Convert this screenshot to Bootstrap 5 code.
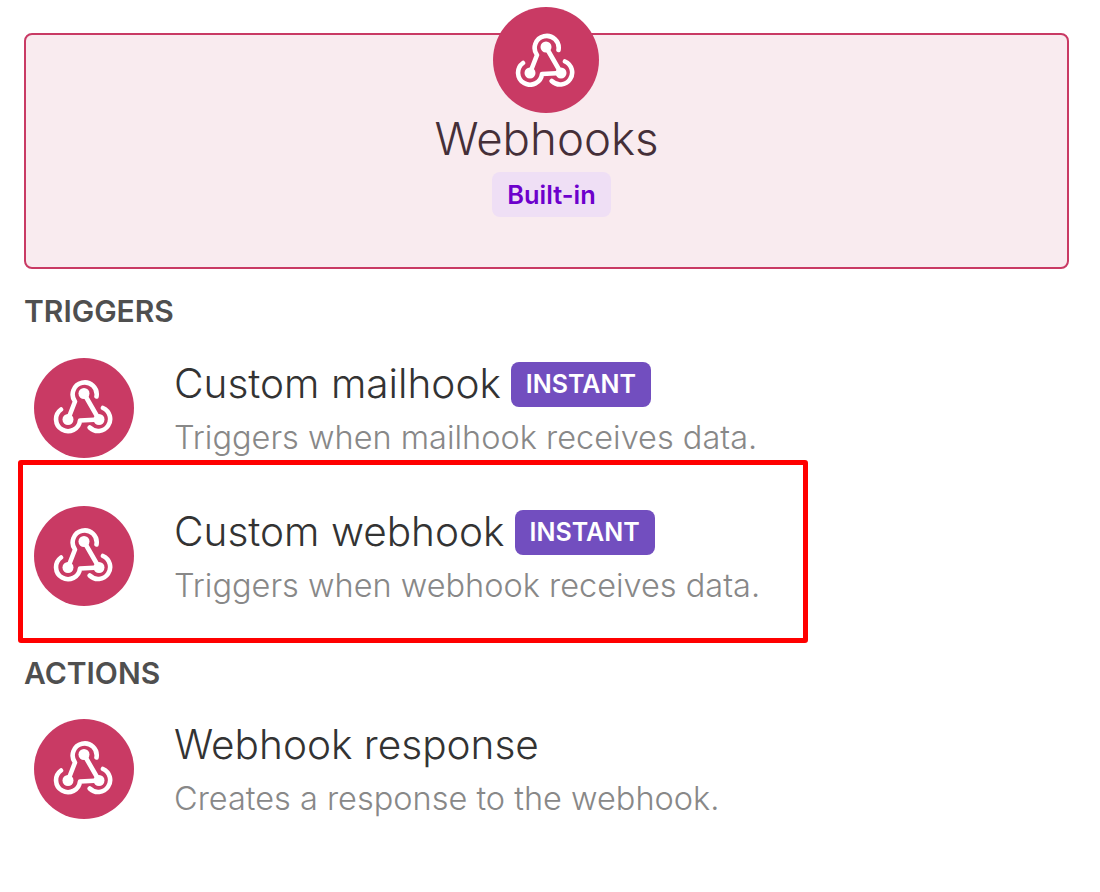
<!DOCTYPE html>
<html lang="en"><head><meta charset="utf-8"><title>Webhooks</title>
<link href="https://cdn.jsdelivr.net/npm/bootstrap@5.3.0/dist/css/bootstrap.min.css" rel="stylesheet">
<style>
body{font-family:Inter,"Liberation Sans",sans-serif;background:#fff;height:892px;overflow:hidden;position:relative}
.wh-page{padding:7px 31px 0 24px}
.wh-hero{margin-top:26px;height:236px;background:#f9ebef;border:2px solid #c93a64;border-radius:8px}
.wh-biglogo{width:106px;height:106px;margin:-28px 1px 0 0;flex:none}
.wh-logo{display:block;border-radius:50%;background:#c93a64}
.wh-strokes{filter:blur(.5px)}
.wh-title{font-size:45.6px;line-height:52px;font-weight:300;color:#452f38}
.wh-builtin{font-size:25.4px;line-height:29px;font-weight:600;color:#6d00cc;background:#efdff5;border-radius:8px;padding:8px 15px;margin:7px 0 0 10px}
.wh-section{font-size:30px;line-height:36px;font-weight:600;color:#4f4f4f;text-transform:uppercase;margin:24px 0 29px}
.wh-section.wh-next{margin-top:1px;margin-bottom:28px}
.wh-row{height:148px;padding-left:10px}
.wh-smalllogo{width:100px;height:100px;flex:none}
.wh-name{font-size:40.55px;line-height:43px;font-weight:300;color:#333;padding-bottom:2px}
.wh-instant{font-size:25px;line-height:29px;font-weight:600;color:#fff;background:#724ebf;border-radius:8px;padding:8px 15px;margin-left:10px}
.wh-desc{font-size:32.5px;line-height:38px;font-weight:300;color:#888;margin:12px 0 0}
.wh-body{margin-left:40px;padding-top:4px}
.wh-callout{position:absolute;left:18px;top:460px;width:790px;height:183px;border:5px solid #f00;border-radius:3px;pointer-events:none}
</style></head>
<body>
<svg width="0" height="0" class="d-block position-absolute"><defs>
<g id="wh-mark" class="wh-strokes" fill="none" stroke="#fff" stroke-width="4.600" stroke-linecap="round" stroke-linejoin="round">
<path d="M65.500 43A12 12 0 1 0 44 48L37 66"/>
<path d="M53 40L68 66"/>
<path d="M30 56A12 12 0 1 0 49 67L68 66"/>
<path d="M72 54.500A12 12 0 1 1 58.700 74"/>
<g fill="#fff" stroke="none"><circle cx="53" cy="40" r="5.500"/><circle cx="37" cy="66" r="5.500"/><circle cx="68" cy="66" r="5.500"/></g>
</g></defs></svg>
<div class="wh-page">
<div class="wh-hero d-flex flex-column align-items-center">
<svg class="wh-logo wh-biglogo" viewBox="0 0 106 106"><use href="#wh-mark"/></svg>
<div class="wh-title">Webhooks</div>
<span class="wh-builtin">Built-in</span>
</div>
<h2 class="wh-section">Triggers</h2>
<div class="wh-row d-flex">
<svg class="wh-logo wh-smalllogo" viewBox="3 4.500 100 100"><use href="#wh-mark"/></svg>
<div class="wh-body"><div class="d-flex align-items-start"><span class="wh-name">Custom mailhook</span><span class="wh-instant">INSTANT</span></div><p class="wh-desc">Triggers when mailhook receives data.</p></div>
</div>
<div class="wh-row d-flex">
<svg class="wh-logo wh-smalllogo" viewBox="3 4.500 100 100"><use href="#wh-mark"/></svg>
<div class="wh-body"><div class="d-flex align-items-start"><span class="wh-name">Custom webhook</span><span class="wh-instant">INSTANT</span></div><p class="wh-desc">Triggers when webhook receives data.</p></div>
</div>
<h2 class="wh-section wh-next">Actions</h2>
<div class="wh-row d-flex">
<svg class="wh-logo wh-smalllogo" viewBox="3 4.500 100 100"><use href="#wh-mark"/></svg>
<div class="wh-body"><div class="wh-name">Webhook response</div><p class="wh-desc">Creates a response to the webhook.</p></div>
</div>
</div>
<div class="wh-callout"></div>
<script src="https://cdn.jsdelivr.net/npm/bootstrap@5.3.0/dist/js/bootstrap.bundle.min.js"></script>
</body></html>
